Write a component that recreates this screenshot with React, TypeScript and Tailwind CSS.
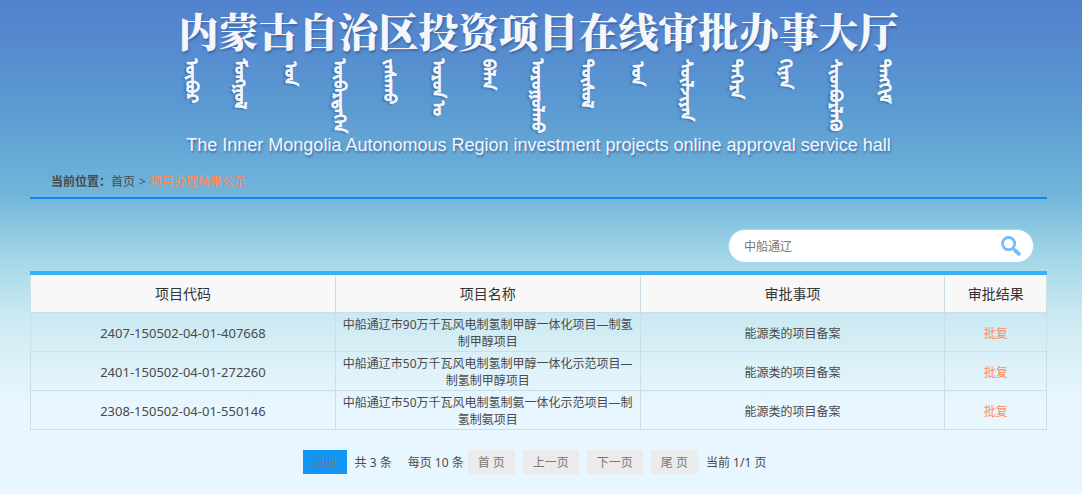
import React from "react";

// case suffixes start with a narrow no-break space so they take their joined form
const words = [
  "ᠥᠪᠦᠷ",
  "ᠮᠣᠩᠭᠣᠯ",
  "\u202Fᠤᠨ",
  "ᠥᠪᠡᠷᠲᠡᠭᠡᠨ",
  "ᠵᠠᠰᠠᠬᠤ",
  "ᠣᠷᠣᠨ\u202Fᠤ",
  "ᠪᠡᠯᠡᠨ",
  "ᠣᠷᠣᠭᠤᠯᠬᠤ",
  "ᠲᠥᠰᠦᠯ",
  "\u202Fᠤᠨ",
  "ᠰᠦᠯᠵᠢᠶᠡᠨ",
  "ᠳᠡᠭᠡᠷᠡ",
  "ᠬᠢᠨᠠᠨ",
  "ᠰᠢᠳᠪᠦᠷᠯᠡᠬᠦ",
  "ᠲᠠᠩᠬᠢᠮ",
];

const rows = [
  { code: "2407-150502-04-01-407668", name: "中船通辽市90万千瓦风电制氢制甲醇一体化项目—制氢制甲醇项目" },
  { code: "2401-150502-04-01-272260", name: "中船通辽市50万千瓦风电制氢制甲醇一体化示范项目—制氢制甲醇项目" },
  { code: "2308-150502-04-01-550146", name: "中船通辽市50万千瓦风电制氢制氨一体化示范项目—制氢制氨项目" },
];

const Header = () => (
  <header className="mr-[35px] ml-[30px] flex flex-col items-center text-[#f4f6fa] [text-shadow:1px_2px_2px_#2b4f8a99]">
    <h1 className="mt-[3px] whitespace-nowrap font-['Noto_Serif_CJK_SC','Noto_Sans_CJK_SC',serif] text-[40px] leading-[54px] font-black">
      内蒙古自治区投资项目在线审批办事大厅
    </h1>
    <div
      lang="mn-Mong"
      className="flex h-[78px] w-[714px] justify-between pt-[2px] text-[16px] leading-5 font-bold [-webkit-text-stroke:0.5px_#f4f6fa]"
    >
      {words.map((word, i) => (
        <span key={i} className="whitespace-nowrap [writing-mode:vertical-lr]">
          {word}
        </span>
      ))}
    </div>
    <p className="whitespace-nowrap font-['Liberation_Sans',sans-serif] text-[18px] leading-5">
      The Inner Mongolia Autonomous Region investment projects online approval service hall
    </p>
  </header>
);

const PageButton = ({ children }: { children: React.ReactNode }) => (
  <button type="button" className="h-6 bg-[#ebebeb] px-[10px] pt-[2px] text-[#777]">
    {children}
  </button>
);

export default function App() {
  return (
    <div className="min-h-screen bg-[linear-gradient(#5182cf_0px,#5487ce_30px,#5b9bd2_110px,#71b5da_195px,#a3d8e6_260px,#cbe9f2_315px,#dff2f9_370px,#e8f6ff_405px,#e8f6ff_100%)] font-['Noto_Sans','Noto_Sans_CJK_SC',sans-serif] text-[12px] text-[#4a4a4a]">
      <Header />
      <main className="mr-[35px] ml-[30px]">
        <nav className="mt-[11px] flex h-[33px] items-center gap-1 border-b-2 border-[#1087f0] px-[21px]">
          <span>
            <strong>当前位置：</strong>
            <a href="#">首页</a>
          </span>
          <span>&gt;</span>
          <a href="#" className="text-[#ff8c57]">项目办理结果公示</a>
        </nav>
        <form className="mt-[30px] mr-[13px] ml-auto flex h-[34px] w-[306px] items-center rounded-full border border-[#a5d3fb] bg-white pr-3 pl-[15px]">
          <input
            aria-label="搜索"
            defaultValue="中船通辽"
            className="min-w-0 flex-1 pt-[2px] text-[#777] outline-none"
          />
          <button type="button" aria-label="搜索">
            <svg width="20" height="20" viewBox="0 0 20 20" fill="none" stroke="#74bdfb">
              <circle cx="7.6" cy="7.6" r="6.1" strokeWidth="2.8" />
              <path d="M11.8 12.3l1.4 1.4" strokeWidth="2" />
              <path d="M14 14.4l3.7 3.4" strokeWidth="4" strokeLinecap="round" />
            </svg>
          </button>
        </form>
        <table className="mt-2 w-full table-fixed border-collapse border border-[#cbdde7] text-center">
          <colgroup>
            <col className="w-[30%]" />
            <col className="w-[30%]" />
            <col className="w-[30%]" />
            <col className="w-[10%]" />
          </colgroup>
          <thead className="border-t-4 border-t-[#37b1fb] bg-[#f8f8f8] text-[14px] text-[#333]">
            <tr className="h-[39px]">
              <th className="border-x border-[#cbdde7] font-normal">项目代码</th>
              <th className="border-x border-[#cbdde7] font-normal">项目名称</th>
              <th className="border-x border-[#cbdde7] font-normal">审批事项</th>
              <th className="border-x border-[#cbdde7] font-normal">审批结果</th>
            </tr>
          </thead>
          <tbody>
            {rows.map((row) => (
              <tr key={row.code} className="h-[39px] leading-[17px]">
                <td className="border border-[#cbdde7] pt-[3px] text-[13px]">{row.code}</td>
                <td className="border border-[#cbdde7] px-[6px] pt-[3px]">{row.name}</td>
                <td className="border border-[#cbdde7] pt-[3px]">能源类的项目备案</td>
                <td className="border border-[#cbdde7] pt-[3px]">
                  <a href="#" className="text-[#ff8c57]">批复</a>
                </td>
              </tr>
            ))}
          </tbody>
        </table>
        <div className="mt-5 flex items-center justify-center gap-2 pr-2">
          <button type="button" className="h-6 bg-[#1296f5] px-[10px] pt-[2px] text-[#777]">
            返回
          </button>
          <span className="pt-[2px]">共 3 条</span>
          <div className="ml-2 flex items-center gap-1">
            <span className="pt-[2px]">每页 10 条</span>
            <PageButton>首 页</PageButton>
          </div>
          <PageButton>上一页</PageButton>
          <PageButton>下一页</PageButton>
          <PageButton>尾 页</PageButton>
          <span className="pt-[2px]">当前 1/1 页</span>
        </div>
      </main>
    </div>
  );
}
